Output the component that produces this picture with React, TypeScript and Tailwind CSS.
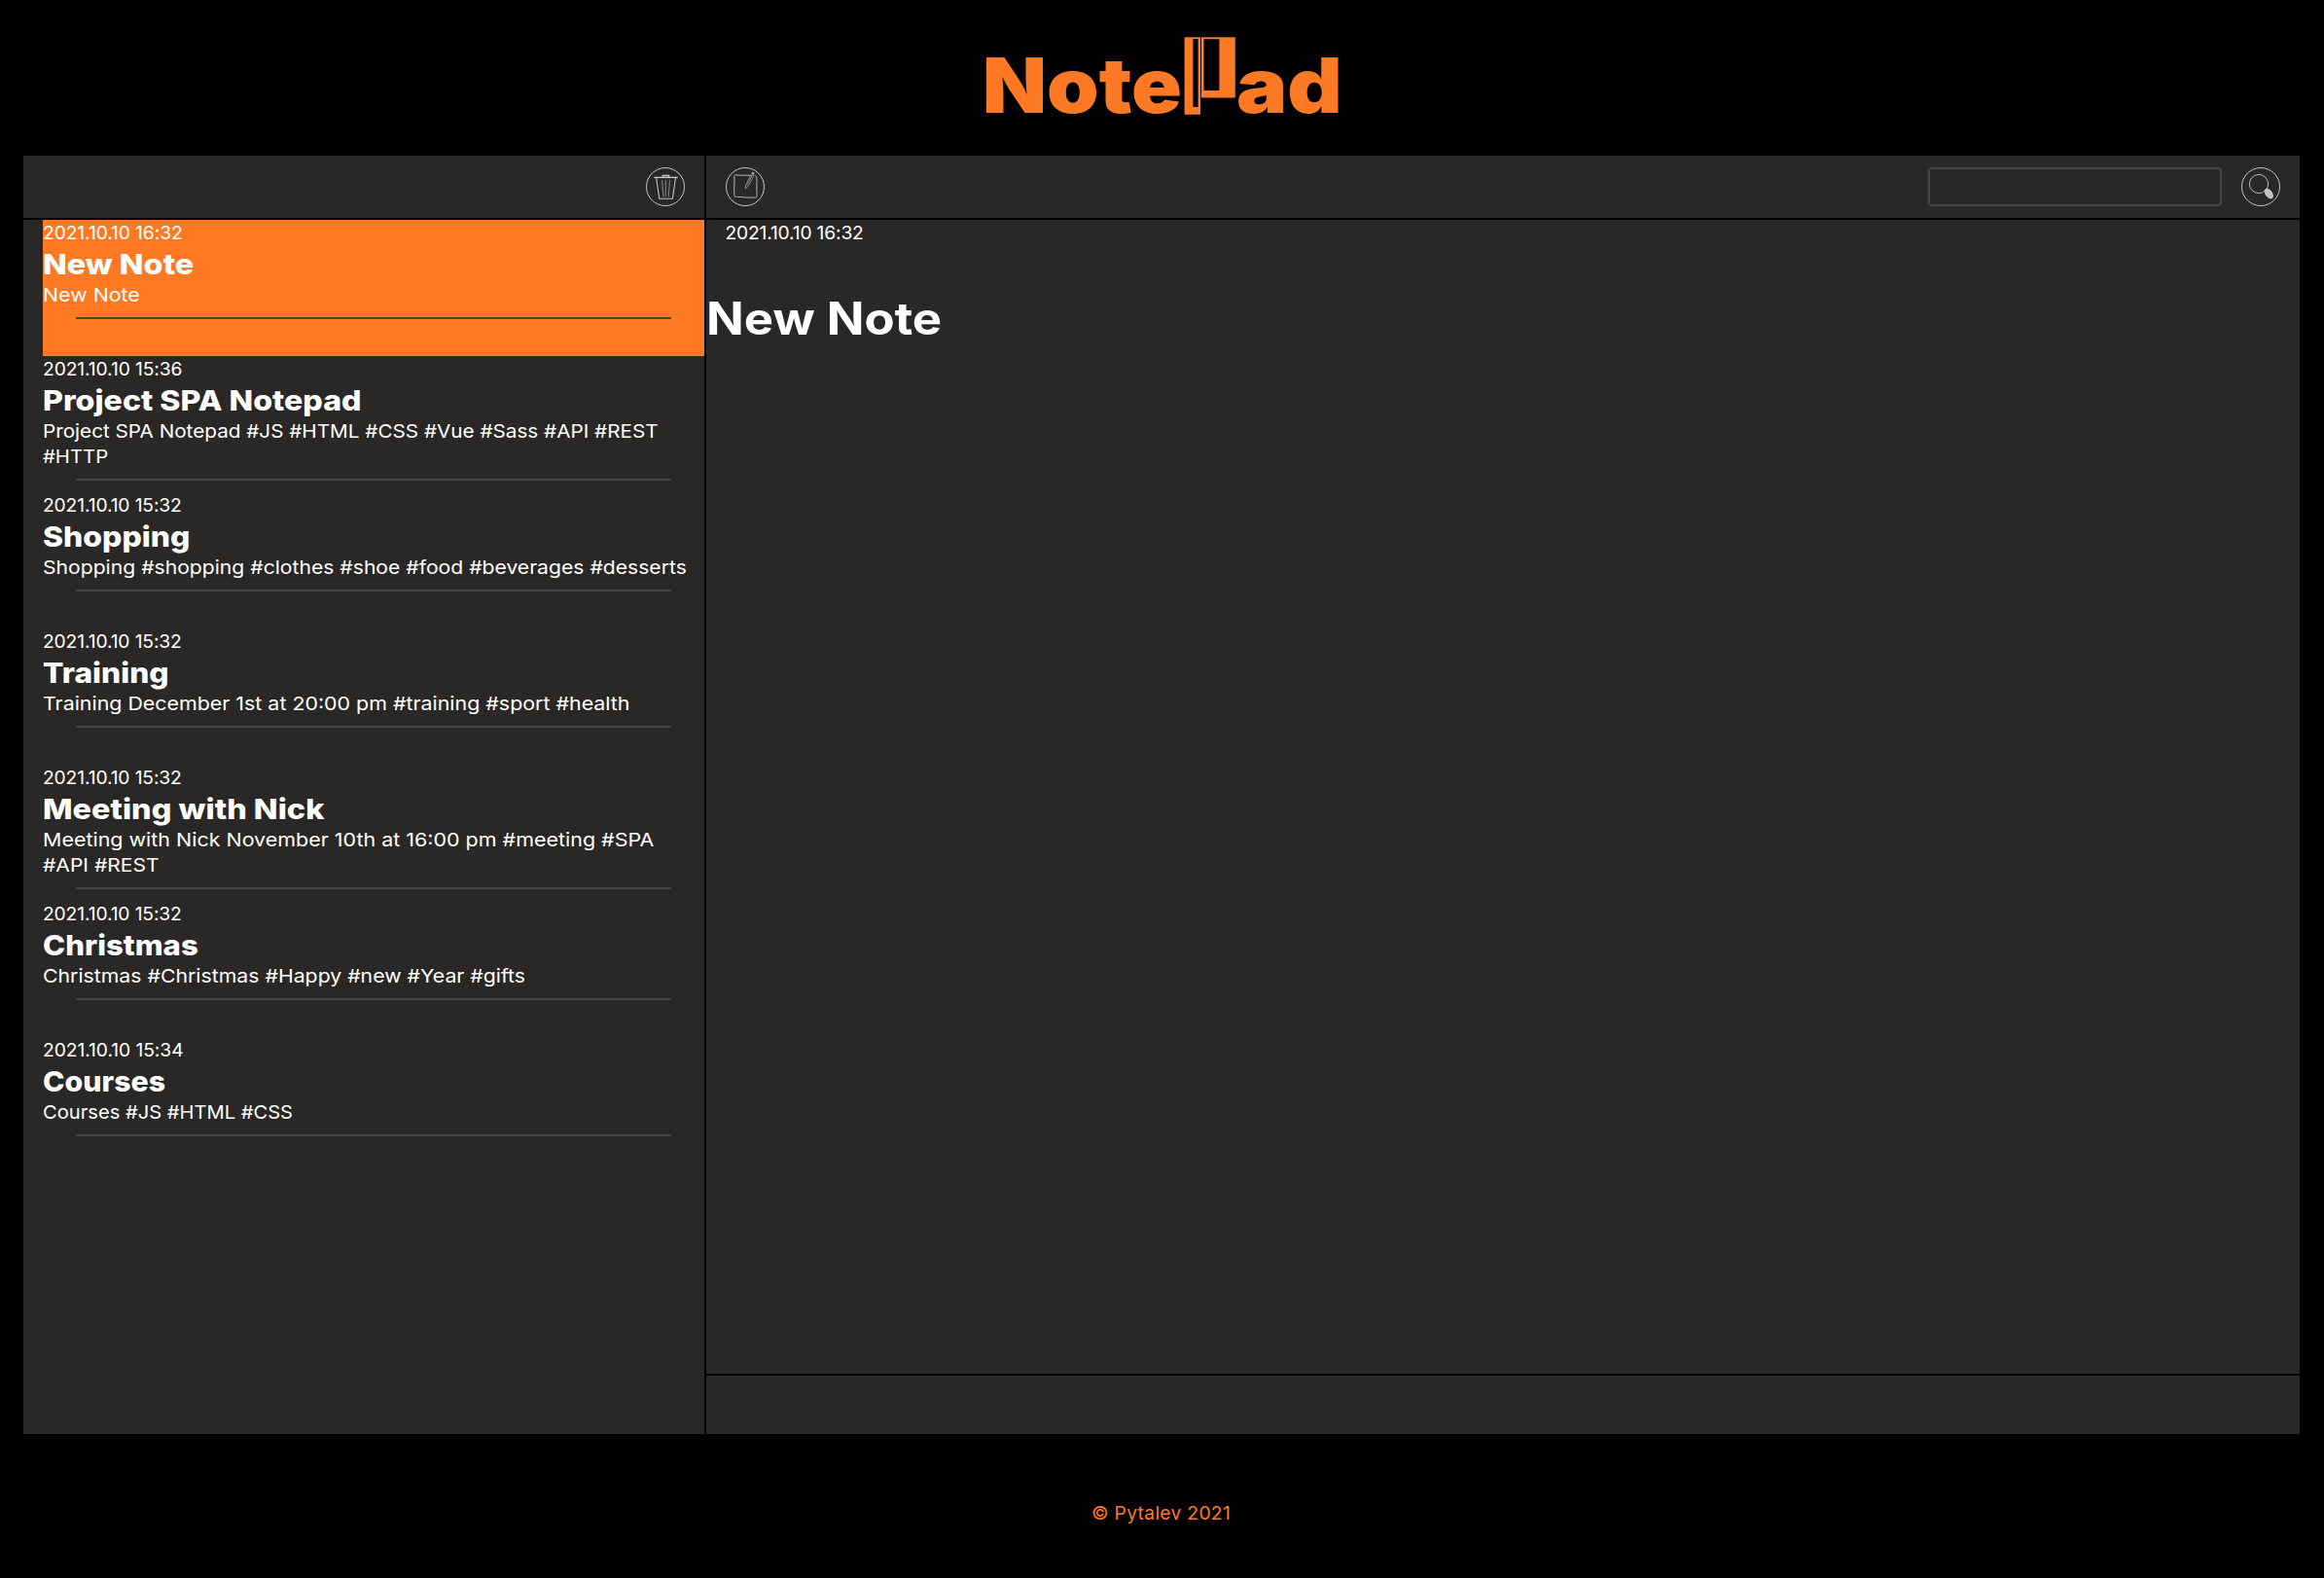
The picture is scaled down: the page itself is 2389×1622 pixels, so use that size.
import React from "react";

type Note = {
  date: string;
  dateTracking: string;
  title: string;
  titleScale: string;
  lines: { text: string; scale: string }[];
  selected?: boolean;
};

const notes: Note[] = [
  {
    date: "2021.10.10 16:32",
    dateTracking: "tracking-[-0.09px]",
    title: "New Note",
    titleScale: "scale-x-[1.116]",
    lines: [{ text: "New Note", scale: "scale-x-[1.11]" }],
    selected: true,
  },
  {
    date: "2021.10.10 15:36",
    dateTracking: "tracking-[-0.1px]",
    title: "Project SPA Notepad",
    titleScale: "scale-x-[1.109]",
    lines: [
      { text: "Project SPA Notepad #JS #HTML #CSS #Vue #Sass #API #REST", scale: "scale-x-[1.075]" },
      { text: "#HTTP", scale: "scale-x-[1.055]" },
    ],
  },
  {
    date: "2021.10.10 15:32",
    dateTracking: "tracking-[-0.13px]",
    title: "Shopping",
    titleScale: "scale-x-[1.1]",
    lines: [{ text: "Shopping #shopping #clothes #shoe #food #beverages #desserts", scale: "scale-x-[1.098]" }],
  },
  {
    date: "2021.10.10 15:32",
    dateTracking: "tracking-[-0.13px]",
    title: "Training",
    titleScale: "scale-x-[1.094]",
    lines: [{ text: "Training December 1st at 20:00 pm #training #sport #health", scale: "scale-x-[1.111]" }],
  },
  {
    date: "2021.10.10 15:32",
    dateTracking: "tracking-[-0.13px]",
    title: "Meeting with Nick",
    titleScale: "scale-x-[1.118]",
    lines: [
      { text: "Meeting with Nick November 10th at 16:00 pm #meeting #SPA", scale: "scale-x-[1.115]" },
      { text: "#API #REST", scale: "scale-x-[1.095]" },
    ],
  },
  {
    date: "2021.10.10 15:32",
    dateTracking: "tracking-[-0.13px]",
    title: "Christmas",
    titleScale: "scale-x-[1.074]",
    lines: [{ text: "Christmas #Christmas #Happy #new #Year #gifts", scale: "scale-x-[1.104]" }],
  },
  {
    date: "2021.10.10 15:34",
    dateTracking: "tracking-[-0.06px]",
    title: "Courses",
    titleScale: "scale-x-[1.043]",
    lines: [{ text: "Courses #JS #HTML #CSS", scale: "scale-x-[1.046]" }],
  },
];

function Logo() {
  return (
    <h1 className="flex h-40 justify-center pt-[15px] text-[78px] font-black leading-[145px] text-[#fe7923]">
      <span className="w-[207px] whitespace-nowrap">
        <span className="inline-block origin-left scale-x-[1.1]">Note</span>
      </span>
      <svg className="mt-[23px] h-20 w-[54px] shrink-0" viewBox="0 0 54 80" fill="currentColor">
        <path fillRule="evenodd" d="M.6 .2H17V79.8H.6ZM9.4 2V72H14.6V2Z" />
        <path fillRule="evenodd" d="M18 .2H52.8V62.4H18ZM20.6 2.2V55H36.4V2.2Z" />
      </svg>
      <span className="w-[108px] whitespace-nowrap">
        <span className="inline-block origin-left scale-x-[1.124]">ad</span>
      </span>
    </h1>
  );
}

function IconButton({ label, children }: { label: string; children: React.ReactNode }) {
  return (
    <button aria-label={label} className="size-10 shrink-0 text-[#c4c4c2]">
      <svg className="size-10" viewBox="0 0 40 40" fill="none" stroke="currentColor">
        <circle cx="20" cy="20" r="19.5" />
        {children}
      </svg>
    </button>
  );
}

function NoteItem({ note }: { note: Note }) {
  return (
    <li className={note.selected ? "h-[140px] bg-[#fe7923]" : "h-[140px]"}>
      <p className={`h-[26px] text-[19.25px] leading-[26px] ${note.dateTracking}`}>{note.date}</p>
      <h3 className="h-[38px] whitespace-nowrap text-[29px] font-extrabold leading-[40px]">
        <span className={`inline-block origin-left ${note.titleScale}`}>{note.title}</span>
      </h3>
      {note.lines.map((line) => (
        <p key={line.text} className="h-[26px] whitespace-nowrap text-[19.25px] leading-[26px]">
          <span className={`inline-block origin-left ${line.scale}`}>{line.text}</span>
        </p>
      ))}
      <hr className="mx-[34px] mt-2.5 border-t-2 border-[#464544]" />
    </li>
  );
}

export default function App() {
  return (
    <div className="flex h-[1622px] w-[2389px] flex-col overflow-hidden bg-black font-['Inter',sans-serif] text-white">
      <Logo />
      <main className="ml-6 flex h-[1314px] w-[2340px] gap-0.5">
        <section className="flex w-[700px] flex-col gap-0.5">
          <div className="flex h-16 items-center justify-end bg-[#292827] pr-5">
            <IconButton label="Delete note">
              <path d="M8.3 10.4H32.7" strokeWidth="1.4" />
              <path d="M17.3 10V8.5H23.7V10" strokeWidth="1.3" />
              <path d="M10.7 11L13.7 32.3H27.3L30.5 11" strokeWidth="1.1" />
              <path d="M16.5 13L18 30.5M20.3 13V30.5M24.6 13L23.1 30.5" strokeWidth=".6" />
            </IconButton>
          </div>
          <ul className="flex-1 bg-[#292827] pl-5">
            {notes.map((note) => (
              <NoteItem key={note.title} note={note} />
            ))}
          </ul>
        </section>
        <section className="flex flex-1 flex-col gap-0.5">
          <div className="flex h-16 items-center bg-[#292827] px-5">
            <IconButton label="Edit note">
              <path
                d="M25.8 8.4C20 7.7 15 8.7 10.5 7.8C9 7.6 8.6 8.7 8.9 10C9.3 16 8.3 22 9 28.5C8.8 30.4 9.5 30.8 11.5 30.3C18 30.6 24 31.4 30.5 31C32 30.9 32.3 30 32.1 28.5C31.6 22 32.2 16 31.8 10.5C31.8 9.3 31.3 8.8 30 8.7"
                strokeWidth=".9"
              />
              <path d="M20.3 21.7L20.6 18.4L26.5 6.8L29.2 8.1L23.1 19.5ZM21.8 18.5L27.6 7.6" strokeWidth=".6" />
              <path d="M26.9 5.9L27.8 5L29.3 5.8L29 7.2Z" fill="currentColor" strokeWidth=".4" />
            </IconButton>
            <input
              aria-label="Search notes"
              className="ml-auto h-10 w-[302px] rounded border-2 border-[#464544] bg-transparent"
            />
            <div className="ml-5 flex">
              <IconButton label="Search">
                <circle cx="18" cy="17" r="9.6" strokeWidth=".9" />
                <ellipse
                  cx="28.3"
                  cy="27"
                  rx="3.7"
                  ry="6"
                  transform="rotate(-38 28.3 27)"
                  fill="currentColor"
                  stroke="none"
                />
              </IconButton>
            </div>
          </div>
          <article className="flex-1 bg-[#292827]">
            <p className="h-[26px] pl-[19.5px] text-[19.25px] leading-[26px] tracking-[-0.18px]">2021.10.10 16:32</p>
            <h2 className="mt-[44px] h-[62px] whitespace-nowrap text-[46px] font-bold leading-[62px]">
              <span className="inline-block origin-left scale-x-[1.106]">New Note</span>
            </h2>
          </article>
          <div className="h-[60px] bg-[#292827]" />
        </section>
      </main>
      <footer className="mt-[68px] pr-0.5 text-center text-[19.25px] leading-[26px] tracking-[0.31px] text-[#fe7923]">
        © Pytalev 2021
      </footer>
    </div>
  );
}
